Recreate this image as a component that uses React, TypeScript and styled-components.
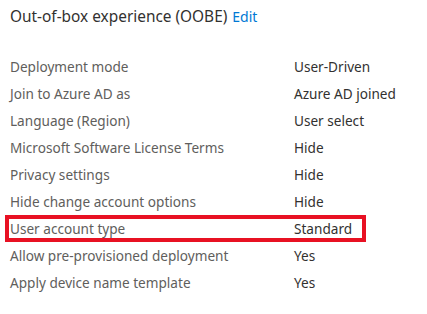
import styled, { createGlobalStyle } from 'styled-components';

const GlobalStyle = createGlobalStyle`
    body {
        margin: 0;
        background: #ffffff;
        font-family: 'Segoe UI', 'Noto Sans', 'Liberation Sans', sans-serif;
    }
`;

const Page = styled.div`
    width: 427px;
    height: 314px;
    padding: 6px 5px 0;
    box-sizing: border-box;
`;

const Header = styled.div`
    display: flex;
    align-items: baseline;
    gap: 5px;
    padding-left: 5px;
    height: 24px;
    font-size: 15.4px;
    color: #323130;
`;

const EditLink = styled.a`
    color: #0078d4;
    font-size: 14px;
    text-decoration: none;
    cursor: pointer;
`;

const List = styled.div`
    display: flex;
    flex-direction: column;
    margin-top: 23px;
`;

const Row = styled.div<{ $highlight?: boolean }>`
    display: grid;
    grid-template-columns: 284px auto;
    align-items: center;
    width: 361px;
    height: 27px;
    padding-left: 5px;
    box-sizing: border-box;
    font-size: 13.6px;
    box-shadow: ${p => (p.$highlight ? 'inset 0 0 0 4px #e81123' : 'none')};
`;

const Label = styled.span`
    color: #605e5c;
    white-space: nowrap;
`;

const Value = styled.span`
    color: #323130;
    white-space: nowrap;
`;

const rows: [string, string][] = [
    ['Deployment mode', 'User-Driven'],
    ['Join to Azure AD as', 'Azure AD joined'],
    ['Language (Region)', 'User select'],
    ['Microsoft Software License Terms', 'Hide'],
    ['Privacy settings', 'Hide'],
    ['Hide change account options', 'Hide'],
    ['User account type', 'Standard'],
    ['Allow pre-provisioned deployment', 'Yes'],
    ['Apply device name template', 'Yes'],
];

export default function App() {
    return (
        <Page>
            <GlobalStyle />
            <Header>
                <span>Out-of-box experience (OOBE)</span>
                <EditLink>Edit</EditLink>
            </Header>
            <List>
                {rows.map(([label, value]) => (
                    <Row key={label} $highlight={label === 'User account type'}>
                        <Label>{label}</Label>
                        <Value>{value}</Value>
                    </Row>
                ))}
            </List>
        </Page>
    );
}
